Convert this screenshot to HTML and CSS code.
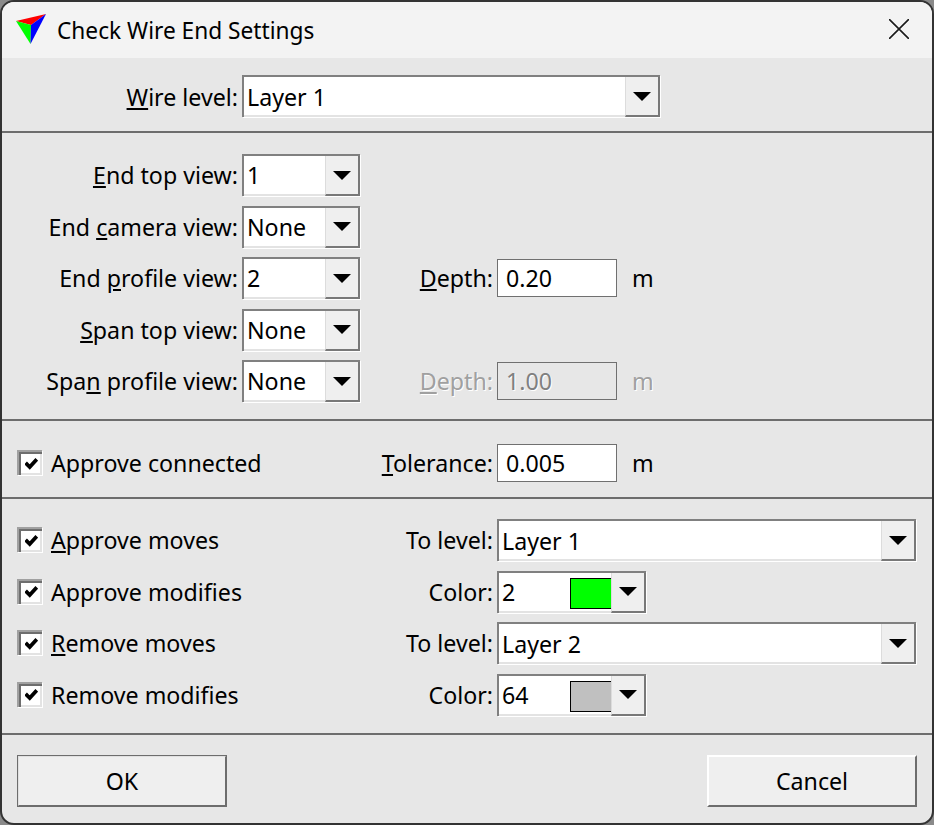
FILE: index.html
```html
<!DOCTYPE html>
<html lang="en">
<head>
<meta charset="utf-8">
<title>Check Wire End Settings</title>
<link rel="stylesheet" href="styles.css">
</head>
<body>
<div class="window">
  <header class="titlebar">
    <svg class="appicon" viewBox="0 0 32 32" width="32" height="32">
      <polygon points="0,7 30,0 15,11" fill="#ff0000"/>
      <polygon points="0,7 15,11 14.500,30" fill="#00ff00"/>
      <polygon points="30,0 15,11 14.500,30" fill="#0000ff"/>
    </svg>
    <span class="title">Check Wire End Settings</span>
    <svg class="close" viewBox="0 0 20 20" width="20" height="20">
      <path d="M0 0L20 20M20 0L0 20" stroke="#1a1a1a" stroke-width="1.6" fill="none"/>
    </svg>
  </header>

  <section class="sec sec-wire">
    <div class="row">
      <span class="lbl lbl-low"><u>W</u>ire level:</span>
      <div class="combo wide-a"><span class="field field-low">Layer 1</span><span class="btn"><i class="arrow"></i></span></div>
    </div>
  </section>

  <section class="sec sec-views">
    <div class="row">
      <span class="lbl"><u>E</u>nd top view:</span>
      <div class="combo small"><span class="field">1</span><span class="btn"><i class="arrow"></i></span></div>
    </div>
    <div class="row">
      <span class="lbl">End <u>c</u>amera view:</span>
      <div class="combo small"><span class="field">None</span><span class="btn"><i class="arrow"></i></span></div>
    </div>
    <div class="row">
      <span class="lbl">End <u>p</u>rofile view:</span>
      <div class="combo small"><span class="field">2</span><span class="btn"><i class="arrow"></i></span></div>
      <span class="lbl2"><u>D</u>epth:</span>
      <span class="input">0.20</span>
      <span class="unit">m</span>
    </div>
    <div class="row">
      <span class="lbl"><u>S</u>pan top view:</span>
      <div class="combo small"><span class="field">None</span><span class="btn"><i class="arrow"></i></span></div>
    </div>
    <div class="row">
      <span class="lbl">Spa<u>n</u> profile view:</span>
      <div class="combo small"><span class="field">None</span><span class="btn"><i class="arrow"></i></span></div>
      <span class="lbl2 disabled"><u>D</u>epth:</span>
      <span class="input input-off">1.00</span>
      <span class="unit disabled">m</span>
    </div>
  </section>

  <section class="sec sec-tol">
    <div class="row">
      <div class="check-cell"><span class="check"><svg viewBox="0 0 11 11" width="13" height="13"><path d="M0.500 5L4 8.500L10 2" stroke="#000" stroke-width="3.200" fill="none"/></svg></span><span>Approve connected</span></div>
      <span class="lbl2"><u>T</u>olerance:</span>
      <span class="input">0.005</span>
      <span class="unit">m</span>
    </div>
  </section>

  <section class="sec sec-actions">
    <div class="row">
      <div class="check-cell"><span class="check"><svg viewBox="0 0 11 11" width="13" height="13"><path d="M0.500 5L4 8.500L10 2" stroke="#000" stroke-width="3.200" fill="none"/></svg></span><span><u>A</u>pprove moves</span></div>
      <span class="lbl2">To level:</span>
      <div class="combo wide-b"><span class="field field-low">Layer 1</span><span class="btn"><i class="arrow"></i></span></div>
    </div>
    <div class="row">
      <div class="check-cell"><span class="check"><svg viewBox="0 0 11 11" width="13" height="13"><path d="M0.500 5L4 8.500L10 2" stroke="#000" stroke-width="3.200" fill="none"/></svg></span><span>Approve modifies</span></div>
      <span class="lbl2">Color:</span>
      <div class="combo color"><span class="field">2<i class="swatch swatch-green"></i></span><span class="btn"><i class="arrow"></i></span></div>
    </div>
    <div class="row">
      <div class="check-cell"><span class="check"><svg viewBox="0 0 11 11" width="13" height="13"><path d="M0.500 5L4 8.500L10 2" stroke="#000" stroke-width="3.200" fill="none"/></svg></span><span><u>R</u>emove moves</span></div>
      <span class="lbl2">To level:</span>
      <div class="combo wide-b"><span class="field field-low">Layer 2</span><span class="btn"><i class="arrow"></i></span></div>
    </div>
    <div class="row">
      <div class="check-cell"><span class="check"><svg viewBox="0 0 11 11" width="13" height="13"><path d="M0.500 5L4 8.500L10 2" stroke="#000" stroke-width="3.200" fill="none"/></svg></span><span>Remove modifies</span></div>
      <span class="lbl2">Color:</span>
      <div class="combo color"><span class="field">64<i class="swatch swatch-gray"></i></span><span class="btn"><i class="arrow"></i></span></div>
    </div>
  </section>

  <footer class="footer">
    <span class="button button-default">OK</span>
    <span class="button">Cancel</span>
  </footer>
</div>
</body>
</html>
```
FILE: styles.css
```css
* { box-sizing: border-box; }
html, body { margin: 0; padding: 0; background: #8a8a8a; }
body { width: 934px; height: 825px; overflow: hidden; }
.window {
  width: 934px; height: 825px;
  border: 2px solid #333;
  border-radius: 14px;
  background: #e7e7e7;
  overflow: hidden;
  font-family: "Noto Sans", "Open Sans", "Liberation Sans", sans-serif;
  font-size: 23.2px;
  color: #000;
  display: flex;
  flex-direction: column;
}
.titlebar {
  height: 56px;
  background: #f3f3f3;
  display: flex;
  align-items: center;
  flex: none;
}
.appicon { margin: 12px 0 0 14px; flex: none; align-self: flex-start; }
.title { margin-left: 9px; font-size: 22.7px; }
.close { margin-left: auto; margin-right: 23px; margin-top: -2px; }

.sec { border-bottom: 2px solid #6d6d6d; display: flex; flex-direction: column; flex: none; }
.sec-wire { height: 75px; padding-top: 17px; }
.sec-views { height: 288px; padding-top: 21px; gap: 9.5px; }
.sec-tol { height: 78px; padding-top: 21px; }
.sec-actions { height: 236px; padding-top: 20px; gap: 9.5px; }

.row { display: flex; align-items: center; height: 42px; flex: none; }
.lbl { width: 236px; text-align: right; margin-right: 4px; flex: none; white-space: nowrap; }
.lbl-low { padding-top: 2px; }
.lbl2 { width: 133px; text-align: right; margin-right: 4px; flex: none; white-space: nowrap; }
.check-cell { width: 358px; padding-left: 15px; display: flex; align-items: center; gap: 9px; flex: none; }

.combo { display: flex; height: 42px; flex: none; border-top: 2px solid #808080; border-left: 2px solid #808080; box-shadow: 1px 1px 0 #fff; }
.wide-a { width: 418px; }
.small { width: 118px; }
.wide-b { width: 419px; }
.color { width: 149px; }
.field { flex: 1; background: #fff; border-bottom: 2px solid #e3e3e3; padding-left: 3px; display: flex; align-items: center; position: relative; }
.field-low { padding-top: 2px; }
.btn { width: 35px; flex: none; background: #efefef; border-left: 1px solid #dcdcdc; border-right: 2px solid #787878; border-bottom: 2px solid #787878; display: flex; align-items: center; justify-content: center; }
.arrow { width: 0; height: 0; border-left: 9px solid transparent; border-right: 9px solid transparent; border-top: 9px solid #000; }
.swatch { position: absolute; right: 0; top: 5px; width: 41px; height: 31px; border: 1px solid #000; border-right: 0; }
.swatch-green { background: #00ff00; }
.swatch-gray { background: #c0c0c0; }

.input { width: 120px; height: 38px; border: 1px solid #707070; background: #fff; padding-left: 8px; display: flex; align-items: center; flex: none; }
.input-off { background: #e7e7e7; color: #808080; text-shadow: 1px 1px 0 #fff; }
.unit { margin-left: 15px; }
.disabled { color: #a0a0a0; text-shadow: 1px 1px 0 #fff; }

.check { width: 25px; height: 25px; margin-top: -1px; background: #fff; border-top: 2px solid #a0a0a0; border-left: 2px solid #a0a0a0; box-shadow: inset 2px 2px 0 #6e6e6e, inset -2px -2px 0 #e3e3e3, 1px 1px 0 #fff; display: flex; align-items: center; justify-content: center; flex: none; }
.check svg { margin: -1px 0 0 1px; }

.footer { display: flex; justify-content: space-between; padding: 20px 15px 0; }
.button { width: 210px; height: 52px; background: #efefef; border-top: 2px solid #fff; border-left: 2px solid #fff; border-right: 2px solid #6d6d6d; border-bottom: 2px solid #6d6d6d; display: flex; align-items: center; justify-content: center; }
.button-default { outline: 1px solid #6d6d6d; outline-offset: -1px; border-color: #e0e0e0 #6d6d6d #6d6d6d #e0e0e0; }
```
